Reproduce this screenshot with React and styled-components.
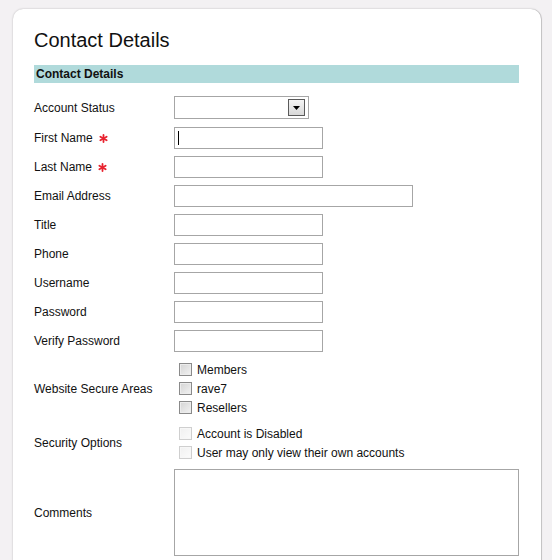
import React from "react";
import styled, { createGlobalStyle } from "styled-components";

const GlobalStyle = createGlobalStyle`
  html, body {
    margin: 0;
    padding: 0;
    background: #f3f1f3;
    font-family: "Liberation Sans", Arial, sans-serif;
  }
`;

const Page = styled.div`
  padding: 9px 11px 0 13px;
  height: 560px;
  box-sizing: border-box;
  overflow: hidden;
`;

const Card = styled.div`
  width: 528px;
  min-height: 600px;
  box-sizing: border-box;
  background: #fff;
  border-radius: 10px 10px 0 0;
  box-shadow: 0 0 2px rgba(0, 0, 0, 0.25), 1px 0 0 #d4d2d4;
  padding: 19px 22px 0 21px;
`;

const Title = styled.h1`
  margin: 0;
  font-size: 20px;
  line-height: 24px;
  font-weight: normal;
  color: #111;
`;

const SectionBar = styled.div`
  margin-top: 13px;
  height: 18px;
  background: #b0dadb;
  font-size: 12px;
  font-weight: bold;
  line-height: 19px;
  padding-left: 2px;
  color: #111;
`;

const Form = styled.div`
  display: flex;
  flex-direction: column;
  gap: 7px;
  margin-top: 13px;
`;

const Row = styled.div`
  display: grid;
  grid-template-columns: 140px 1fr;
  align-items: center;
  margin-bottom: ${({ $after }) => $after || 0}px;
`;

const Label = styled.div`
  font-size: 12px;
  line-height: 15px;
  padding-top: 1px;
  color: #111;
  display: flex;
  align-items: center;
  gap: 6px;
`;

const Field = styled.div`
  position: relative;
  display: flex;
`;

const TextInput = styled.input`
  width: ${({ $w }) => $w}px;
  height: 22px;
  box-sizing: border-box;
  border: 1px solid #a6a6a6;
  padding: 2px 3px;
  font-family: inherit;
  font-size: 12px;
  outline: none;
  margin: 0;
`;

const Caret = styled.span`
  position: absolute;
  left: 4px;
  top: 4px;
  width: 1px;
  height: 14px;
  background: #000;
`;

const SelectBox = styled.div`
  width: 135px;
  height: 23px;
  box-sizing: border-box;
  border: 1px solid #a6a6a6;
  display: flex;
  justify-content: flex-end;
  align-items: center;
  padding-right: 3px;
  background: #fff;
`;

const DropButton = styled.div`
  width: 17px;
  height: 17px;
  box-sizing: border-box;
  border: 1px solid #5a5a5a;
  background: linear-gradient(#f4f4f4, #d8d8d8);
  display: flex;
  align-items: center;
  justify-content: center;
`;

const CheckList = styled.div`
  display: flex;
  flex-direction: column;
`;

const CheckItem = styled.label`
  height: 19px;
  display: flex;
  align-items: center;
  font-size: 12px;
  color: #111;
`;

const Box = styled.span`
  width: 13px;
  height: 13px;
  box-sizing: border-box;
  margin: 0 5px 0 5px;
  border: 1px solid ${({ $disabled }) => ($disabled ? "#cfcfcf" : "#8a8a8a")};
  background: ${({ $disabled }) =>
    $disabled
      ? "linear-gradient(135deg, #f0f0f0, #fbfbfb)"
      : "linear-gradient(135deg, #d4d4d4, #f2f2f2)"};
  box-shadow: inset 0 0 0 1px ${({ $disabled }) => ($disabled ? "#f7f7f7" : "#ececec")};
`;

const TextArea = styled.textarea`
  width: 345px;
  height: 87px;
  box-sizing: border-box;
  border: 1px solid #a6a6a6;
  resize: none;
  outline: none;
  margin: 0;
  font-family: inherit;
`;

const Star = () => (
  <svg width="9" height="9" viewBox="0 0 10 10">
    <g stroke="#e8232f" strokeWidth="2" strokeLinecap="round">
      <line x1="5" y1="1" x2="5" y2="9" />
      <line x1="1.5" y1="3" x2="8.5" y2="7" />
      <line x1="1.5" y1="7" x2="8.5" y2="3" />
    </g>
  </svg>
);

const textRows = [
  { label: "First Name", req: true, w: 149, caret: true },
  { label: "Last Name", req: true, w: 149 },
  { label: "Email Address", w: 239 },
  { label: "Title", w: 149 },
  { label: "Phone", w: 149 },
  { label: "Username", w: 149 },
  { label: "Password", w: 149, type: "password" },
  { label: "Verify Password", w: 149, type: "password", after: 1 },
];

export default function App() {
  return (
    <>
      <GlobalStyle />
      <Page>
        <Card>
          <Title>Contact Details</Title>
          <SectionBar>Contact Details</SectionBar>
          <Form>
            <Row $after={1}>
              <Label>Account Status</Label>
              <Field>
                <SelectBox>
                  <DropButton>
                    <svg width="7" height="4" viewBox="0 0 7 4">
                      <path d="M0 0H7L3.5 4Z" fill="#000" />
                    </svg>
                  </DropButton>
                </SelectBox>
              </Field>
            </Row>
            {textRows.map((r) => (
              <Row key={r.label} $after={r.after}>
                <Label>
                  {r.label}
                  {r.req && <Star />}
                </Label>
                <Field>
                  <TextInput $w={r.w} type={r.type || "text"} />
                  {r.caret && <Caret />}
                </Field>
              </Row>
            ))}
            <Row>
              <Label>Website Secure Areas</Label>
              <CheckList>
                {["Members", "rave7", "Resellers"].map((t) => (
                  <CheckItem key={t}>
                    <Box />
                    {t}
                  </CheckItem>
                ))}
              </CheckList>
            </Row>
            <Row>
              <Label>Security Options</Label>
              <CheckList>
                {["Account is Disabled", "User may only view their own accounts"].map((t) => (
                  <CheckItem key={t}>
                    <Box $disabled />
                    {t}
                  </CheckItem>
                ))}
              </CheckList>
            </Row>
            <Row>
              <Label>Comments</Label>
              <Field>
                <TextArea />
              </Field>
            </Row>
          </Form>
        </Card>
      </Page>
    </>
  );
}
